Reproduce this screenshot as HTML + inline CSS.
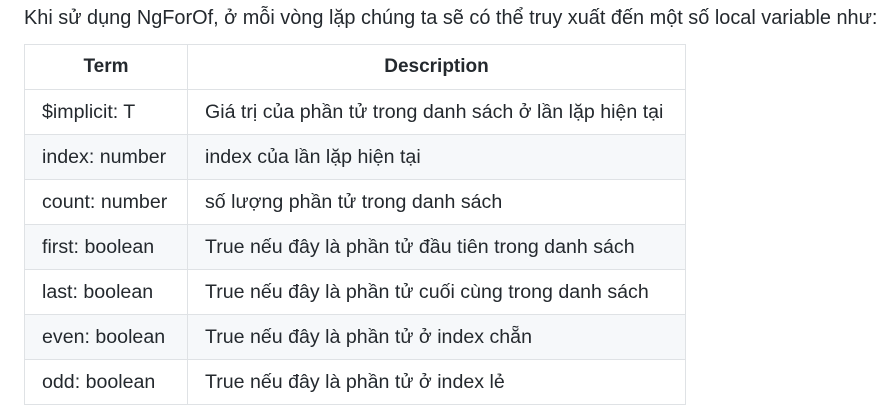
<!DOCTYPE html>
<html><head><meta charset="utf-8"><style>
body{margin:0;background:#fff;width:882px;height:405px;overflow:hidden;font-family:"Liberation Sans",sans-serif;color:#24292e;font-size:19.6px;}
p{position:absolute;left:24px;top:6px;margin:0;white-space:nowrap;line-height:24px;font-size:19.9px;}
table{position:absolute;left:24px;top:44px;border-collapse:collapse;width:662px;table-layout:fixed;}
td,th{border:1px solid #dfe2e5;height:44px;padding:0 0 0 17px;text-align:left;white-space:nowrap;}
th{font-weight:bold;text-align:center;padding:0;font-size:19px;}
tr:nth-child(odd) td{background:#f6f8fa;}
td:first-child,th:first-child{width:163px;box-sizing:border-box;}
</style></head><body>
<p>Khi sử dụng NgForOf, ở mỗi vòng lặp chúng ta sẽ có thể truy xuất đến một số local variable như:</p>
<table>
<colgroup><col style="width:163px"><col></colgroup>
<tr><th>Term</th><th>Description</th></tr>
<tr><td>$implicit: T</td><td>Giá trị của phần tử trong danh sách ở lần lặp hiện tại</td></tr>
<tr><td>index: number</td><td>index của lần lặp hiện tại</td></tr>
<tr><td>count: number</td><td>số lượng phần tử trong danh sách</td></tr>
<tr><td>first: boolean</td><td>True nếu đây là phần tử đầu tiên trong danh sách</td></tr>
<tr><td>last: boolean</td><td>True nếu đây là phần tử cuối cùng trong danh sách</td></tr>
<tr><td>even: boolean</td><td>True nếu đây là phần tử ở index chẵn</td></tr>
<tr><td>odd: boolean</td><td>True nếu đây là phần tử ở index lẻ</td></tr>
</table>
</body></html>
